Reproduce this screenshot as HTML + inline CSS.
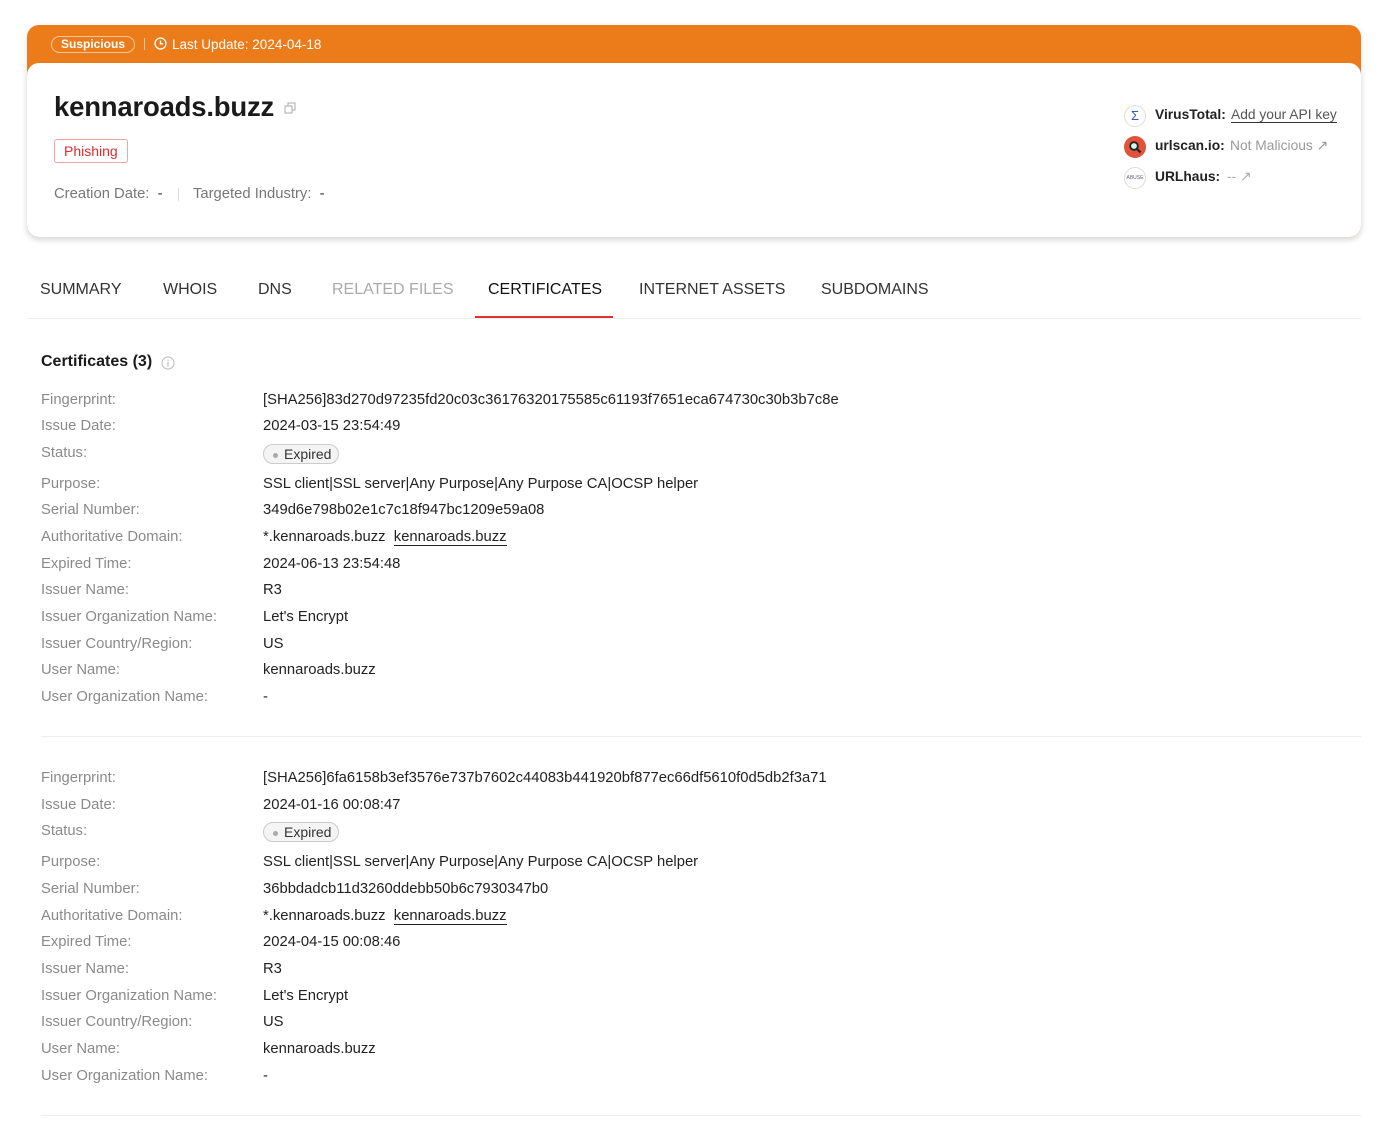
<!DOCTYPE html>
<html><head><meta charset="utf-8"><style>
*{margin:0;padding:0;box-sizing:border-box}
body{width:1384px;height:1123px;background:#fff;font-family:"Liberation Sans",sans-serif;position:relative;overflow:hidden;color:#222}
.a{position:absolute;white-space:nowrap}
.lab{position:absolute;left:41px;font-size:14.8px;color:#8a8a8a;white-space:nowrap;margin-top:2px}
.val{position:absolute;left:263px;font-size:14.8px;color:#222;white-space:nowrap;margin-top:2px}
.badge{display:inline-block;border:1px solid #ccc;background:#f4f4f4;border-radius:11px;padding:1px 7px 1px 20px;position:relative;font-size:14px;color:#333}
.badge:before{content:"";position:absolute;left:9px;top:8px;width:5px;height:5px;border-radius:50%;background:#aaa}
.u{border-bottom:1px solid #222}
.tab{position:absolute;top:281px;font-size:16px;color:#333}
</style></head><body>
<div class="a" style="left:27px;top:25px;width:1334px;height:212px;border-radius:12px;background:#ec7b1a;box-shadow:0 2px 8px rgba(0,0,0,.1)"></div>
<div class="a" style="left:27px;top:63px;width:1334px;height:174px;border-radius:12px;background:#fff;box-shadow:0 3px 6px rgba(0,0,0,.08)"></div>
<div class="a" style="left:51px;top:36px;height:17px;padding:0 9px;border:1px solid #f6c79e;border-radius:9px;color:#fff;font-size:12px;font-weight:bold;line-height:15px">Suspicious</div>
<div class="a" style="left:144px;top:38px;width:1px;height:12px;background:#f6c79e"></div>
<svg class="a" style="left:154px;top:37px" width="13" height="13" viewBox="0 0 13 13"><circle cx="6.5" cy="6.5" r="5.5" fill="none" stroke="#fff" stroke-width="1.3"/><path d="M6.5 3.5V6.8H9" fill="none" stroke="#fff" stroke-width="1.3"/></svg>
<div class="a" style="left:172px;top:37px;color:#fff;font-size:13.5px">Last Update: 2024-04-18</div>
<div class="a" style="left:54px;top:91px;font-size:27.5px;font-weight:bold;color:#1a1a1a;letter-spacing:-0.2px">kennaroads.buzz</div>
<svg class="a" style="left:284px;top:102px" width="12" height="12" viewBox="0 0 12 12"><rect x="1" y="4" width="7" height="7" fill="none" stroke="#aaa"/><path d="M4 4V1H11V8H8" fill="none" stroke="#aaa"/></svg>
<div class="a" style="left:54px;top:139px;height:24px;padding:0 9px;border:1px solid #f3a5a5;border-radius:3px;color:#e02b2b;font-size:14px;line-height:22px">Phishing</div>
<div class="a" style="left:54px;top:186px;font-size:14.8px;color:#777">Creation Date:&nbsp; <span style="color:#333">-</span></div>
<div class="a" style="left:178px;top:188px;width:1px;height:13px;background:#ddd"></div>
<div class="a" style="left:193px;top:186px;font-size:14.8px;color:#777">Targeted Industry:&nbsp; <span style="color:#333">-</span></div>
<div class="a" style="left:1124px;top:105px;width:22px;height:22px;border-radius:50%;border:1px solid #ddd;color:#2a5bd7;font-size:13px;text-align:center;line-height:20px">Σ</div>
<div class="a" style="left:1155px;top:107px;font-size:13.8px;font-weight:bold;color:#222">VirusTotal:</div>
<div class="a" style="left:1231px;top:107px;font-size:13.8px;color:#555"><span class="u" style="border-color:#333">Add your API key</span></div>
<div class="a" style="left:1124px;top:136px;width:22px;height:22px;border-radius:50%;background:#e0523a"></div>
<svg class="a" style="left:1128px;top:140px" width="14" height="14" viewBox="0 0 14 14"><circle cx="6" cy="6" r="3.8" fill="#cfe" stroke="#222" stroke-width="1.8"/><path d="M9 9L12.5 12.5" stroke="#222" stroke-width="2.2"/></svg>
<div class="a" style="left:1155px;top:138px;font-size:13.8px;font-weight:bold;color:#222">urlscan.io:</div>
<div class="a" style="left:1230px;top:138px;font-size:13.8px;color:#999">Not Malicious ↗</div>
<div class="a" style="left:1124px;top:167px;width:22px;height:22px;border-radius:50%;border:1px solid #ddd;font-size:5px;color:#668;text-align:center;line-height:20px">ABUSE</div>
<div class="a" style="left:1155px;top:169px;font-size:13.8px;font-weight:bold;color:#222">URLhaus:</div>
<div class="a" style="left:1227px;top:169px;font-size:13.8px;color:#aaa">-- ↗</div>
<div class="tab" style="left:40px">SUMMARY</div>
<div class="tab" style="left:163px">WHOIS</div>
<div class="tab" style="left:258px">DNS</div>
<div class="tab" style="left:332px;color:#aaa">RELATED FILES</div>
<div class="tab" style="left:488px;color:#111">CERTIFICATES</div>
<div class="tab" style="left:639px">INTERNET ASSETS</div>
<div class="tab" style="left:821px">SUBDOMAINS</div>
<div class="a" style="left:27px;top:318px;width:1334px;height:1px;background:#eee"></div>
<div class="a" style="left:475px;top:316px;width:138px;height:2px;background:#e0332a"></div>
<div class="a" style="left:41px;top:353px;font-size:16px;font-weight:bold;color:#1a1a1a">Certificates (3)</div>
<svg class="a" style="left:161px;top:356px" width="14" height="14" viewBox="0 0 14 14"><circle cx="7" cy="7" r="6" fill="none" stroke="#bbb"/><path d="M7 6V10.5M7 3.8V4.8" stroke="#bbb" stroke-width="1.2"/></svg>

<div class="lab" style="top:390px">Fingerprint:</div><div class="val" style="top:390px">[SHA256]83d270d97235fd20c03c36176320175585c61193f7651eca674730c30b3b7c8e</div>
<div class="lab" style="top:416px">Issue Date:</div><div class="val" style="top:416px">2024-03-15 23:54:49</div>
<div class="lab" style="top:443px">Status:</div><div class="val" style="top:442px"><span class="badge">Expired</span></div>
<div class="lab" style="top:474px">Purpose:</div><div class="val" style="top:474px">SSL client|SSL server|Any Purpose|Any Purpose CA|OCSP helper</div>
<div class="lab" style="top:500px">Serial Number:</div><div class="val" style="top:500px">349d6e798b02e1c7c18f947bc1209e59a08</div>
<div class="lab" style="top:527px">Authoritative Domain:</div><div class="val" style="top:527px">*.kennaroads.buzz &nbsp;<span class="u">kennaroads.buzz</span></div>
<div class="lab" style="top:554px">Expired Time:</div><div class="val" style="top:554px">2024-06-13 23:54:48</div>
<div class="lab" style="top:580px">Issuer Name:</div><div class="val" style="top:580px">R3</div>
<div class="lab" style="top:607px">Issuer Organization Name:</div><div class="val" style="top:607px">Let's Encrypt</div>
<div class="lab" style="top:634px">Issuer Country/Region:</div><div class="val" style="top:634px">US</div>
<div class="lab" style="top:660px">User Name:</div><div class="val" style="top:660px">kennaroads.buzz</div>
<div class="lab" style="top:687px">User Organization Name:</div><div class="val" style="top:687px">-</div>
<div class="a" style="left:41px;top:736px;width:1320px;height:1px;background:#eee"></div>

<div class="lab" style="top:768px">Fingerprint:</div><div class="val" style="top:768px">[SHA256]6fa6158b3ef3576e737b7602c44083b441920bf877ec66df5610f0d5db2f3a71</div>
<div class="lab" style="top:795px">Issue Date:</div><div class="val" style="top:795px">2024-01-16 00:08:47</div>
<div class="lab" style="top:821px">Status:</div><div class="val" style="top:820px"><span class="badge">Expired</span></div>
<div class="lab" style="top:852px">Purpose:</div><div class="val" style="top:852px">SSL client|SSL server|Any Purpose|Any Purpose CA|OCSP helper</div>
<div class="lab" style="top:879px">Serial Number:</div><div class="val" style="top:879px">36bbdadcb11d3260ddebb50b6c7930347b0</div>
<div class="lab" style="top:906px">Authoritative Domain:</div><div class="val" style="top:906px">*.kennaroads.buzz &nbsp;<span class="u">kennaroads.buzz</span></div>
<div class="lab" style="top:932px">Expired Time:</div><div class="val" style="top:932px">2024-04-15 00:08:46</div>
<div class="lab" style="top:959px">Issuer Name:</div><div class="val" style="top:959px">R3</div>
<div class="lab" style="top:986px">Issuer Organization Name:</div><div class="val" style="top:986px">Let's Encrypt</div>
<div class="lab" style="top:1012px">Issuer Country/Region:</div><div class="val" style="top:1012px">US</div>
<div class="lab" style="top:1039px">User Name:</div><div class="val" style="top:1039px">kennaroads.buzz</div>
<div class="lab" style="top:1066px">User Organization Name:</div><div class="val" style="top:1066px">-</div>
<div class="a" style="left:41px;top:1115px;width:1320px;height:1px;background:#eee"></div>
</body></html>
